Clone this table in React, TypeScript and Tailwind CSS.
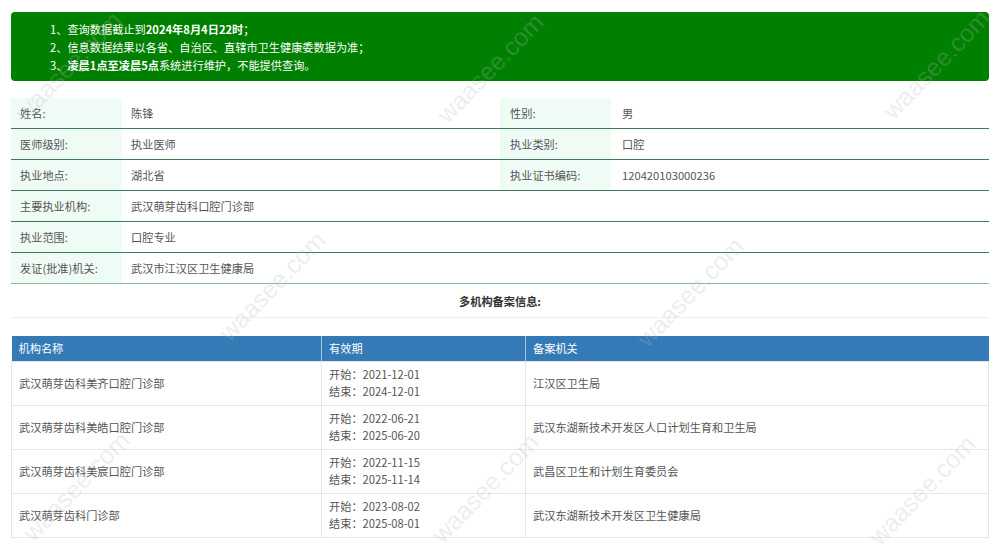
import React from "react";

interface InfoRow {
  label: string;
  value: string;
  label2?: string;
  value2?: string;
}

interface Record {
  name: string;
  start: string;
  end: string;
  office: string;
}

const infoRows: InfoRow[] = [
  { label: "姓名:", value: "陈锋", label2: "性别:", value2: "男" },
  { label: "医师级别:", value: "执业医师", label2: "执业类别:", value2: "口腔" },
  { label: "执业地点:", value: "湖北省", label2: "执业证书编码:", value2: "120420103000236" },
  { label: "主要执业机构:", value: "武汉萌芽齿科口腔门诊部" },
  { label: "执业范围:", value: "口腔专业" },
  { label: "发证(批准)机关:", value: "武汉市江汉区卫生健康局" },
];

const records: Record[] = [
  { name: "武汉萌芽齿科美齐口腔门诊部", start: "2021-12-01", end: "2024-12-01", office: "江汉区卫生局" },
  { name: "武汉萌芽齿科美皓口腔门诊部", start: "2022-06-21", end: "2025-06-20", office: "武汉东湖新技术开发区人口计划生育和卫生局" },
  { name: "武汉萌芽齿科美宸口腔门诊部", start: "2022-11-15", end: "2025-11-14", office: "武昌区卫生和计划生育委员会" },
  { name: "武汉萌芽齿科门诊部", start: "2023-08-02", end: "2025-08-01", office: "武汉东湖新技术开发区卫生健康局" },
];

// watermark centres, read off the screenshot
const marks = [
  [68, 66], [490, 68], [936, 64],
  [272, 286], [690, 292],
  [76, 486], [485, 488], [922, 490],
];

function Watermark({ x, y }: { x: number; y: number }) {
  return (
    <div
      className="pointer-events-none absolute text-[25px] text-[rgba(185,185,185,0.25)] whitespace-nowrap [font-family:'Liberation_Sans',sans-serif]"
      style={{ left: x, top: y, transform: "translate(-50%,-50%) rotate(-46deg)" }}
    >
      waasee.com
    </div>
  );
}

export default function App() {
  return (
    <div className="relative h-[549px] overflow-hidden bg-white px-[11px] pt-[12px] text-[11.2px] text-[#555] [font-family:'Noto_Sans_CJK_SC',sans-serif] leading-[18px]">
      {/* 提示 */}
      <div className="rounded-[4px] bg-[#008000] pt-[8px] pb-[7px] pl-[39px] text-white">
        <p>1、查询数据截止到<b>2024年8月4日22时</b>；</p>
        <p>2、信息数据结果以各省、自治区、直辖市卫生健康委数据为准；</p>
        <p>3、<b>凌晨1点至凌晨5点</b>系统进行维护，不能提供查询。</p>
      </div>

      {/* 医师信息 */}
      <div className="mt-[17px]">
        {infoRows.map((row, i) => (
          <div
            key={row.label}
            className={
              "flex h-[31px] border-b " +
              (i === infoRows.length - 1 ? "border-[#8dbb9f]" : "border-[#3d7b5a]")
            }
          >
            <div className="flex w-[111px] items-center bg-[#effcf6] pl-[9px]">{row.label}</div>
            <div className="flex w-[378px] items-center pl-[9px]">{row.value}</div>
            {row.label2 ? (
              <>
                <div className="flex w-[111px] items-center bg-[#effcf6] pl-[10px]">{row.label2}</div>
                <div className="flex flex-1 items-center pl-[11px]">{row.value2}</div>
              </>
            ) : (
              <div className="flex-1" />
            )}
          </div>
        ))}
        <div className="flex h-[34px] items-center justify-center border-b border-[#eeeeee] font-bold text-[#333]">
          多机构备案信息:
        </div>
      </div>

      {/* 多机构备案 */}
      <table className="mt-[18px] w-full border-collapse">
        <thead>
          <tr className="h-[25px] bg-[#337ab7] text-left text-white">
            <th className="w-[310px] border-r border-[#a9c6df] pl-[7px] font-normal">机构名称</th>
            <th className="w-[204px] border-r border-[#a9c6df] pl-[7px] font-normal">有效期</th>
            <th className="pl-[7px] font-normal">备案机关</th>
          </tr>
        </thead>
        <tbody>
          {records.map((r) => (
            <tr key={r.name} className="h-[44px] border border-[#e6e6e6]">
              <td className="border-r border-[#e6e6e6] pl-[7px]">{r.name}</td>
              <td className="border-r border-[#e6e6e6] pl-[7px] leading-[17px]">
                <div>开始：{r.start}</div>
                <div>结束：{r.end}</div>
              </td>
              <td className="pl-[7px]">{r.office}</td>
            </tr>
          ))}
        </tbody>
      </table>

      {marks.map(([x, y]) => (
        <Watermark key={`${x}-${y}`} x={x} y={y} />
      ))}
    </div>
  );
}
